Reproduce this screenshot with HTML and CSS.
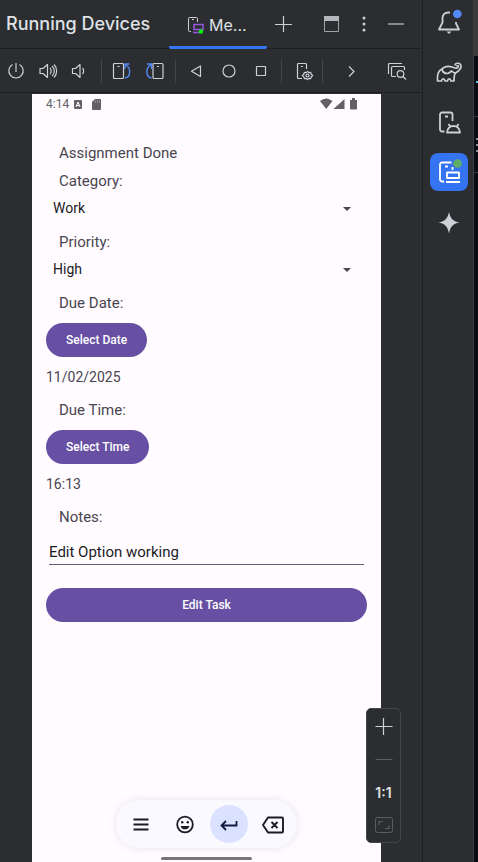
FILE: index.html
```html
<!DOCTYPE html>
<html lang="en">
<head>
<meta charset="utf-8">
<meta name="viewport" content="width=device-width, initial-scale=1">
<title>Running Devices</title>
<link rel="stylesheet" href="styles.css">
</head>
<body>
<main class="panel">
  <header class="header">
    <h1 class="title">Running Devices</h1>
    <button class="tab" type="button">
      <svg width="18" height="20" viewBox="0 0 18 20" fill="none" stroke="#ced0d6"><path d="M4 16.500H2.500a1 1 0 0 1-1-1v-12a1 1 0 0 1 1-1h7a1 1 0 0 1 1 1V7M5 4.500h2"/><path d="M7 9.500h9v5H7zM6 17.500h7" stroke="#955ae0" stroke-width="1.500"/><circle cx="14" cy="16.500" r="2.300" fill="#00f500" stroke="none"/></svg>
      Me...
    </button>
    <div class="header-actions">
      <button class="icon" type="button" aria-label="Add device"><svg width="20" height="20" viewBox="0 0 20 20" stroke="#ced0d6" stroke-width="1.200"><path d="M10.500 2v16M2 10.500h17"/></svg></button>
      <button class="icon window" type="button" aria-label="Window"><svg width="20" height="20" viewBox="0 0 20 20"><path d="M2.500 2.500h14v15h-14z" fill="none" stroke="#9da0a8"/><path d="M2 2h15v5H2z" fill="#b4b6bc"/></svg></button>
      <button class="icon" type="button" aria-label="Options"><svg width="20" height="20" viewBox="0 0 20 20" fill="#ced0d6"><circle cx="10" cy="4" r="1.500"/><circle cx="10" cy="10" r="1.500"/><circle cx="10" cy="16" r="1.500"/></svg></button>
      <button class="icon" type="button" aria-label="Hide"><svg width="20" height="20" viewBox="0 0 20 20" stroke="#a5a7ad" stroke-width="1.500"><path d="M2 10h16"/></svg></button>
    </div>
  </header>

  <div class="toolbar">
    <div class="group first">
      <button class="icon" type="button" aria-label="Power"><svg width="20" height="20" viewBox="0 0 20 20" fill="none" stroke="#ced0d6" stroke-width="1.200"><path d="M10 2v9M6.500 3.500a7.200 7.200 0 1 0 7 0"/></svg></button>
      <button class="icon" type="button" aria-label="Volume up"><svg width="20" height="20" viewBox="0 0 20 20" fill="none" stroke="#ced0d6" stroke-width="1.200" stroke-linejoin="round"><path d="M2 7.500h3l4.500-4v13l-4.500-4H2zM12 7c1.500 1.500 1.500 4.500 0 6M14 5c3 2.500 3 7.500 0 10M16 3.500c3.500 3.500 3.500 9.500 0 13"/></svg></button>
      <button class="icon" type="button" aria-label="Volume down"><svg width="20" height="20" viewBox="0 0 20 20" fill="none" stroke="#ced0d6" stroke-width="1.200" stroke-linejoin="round"><path d="M2.500 7.500h3l4.500-4v13l-4.500-4h-3zM12.500 7c1.500 1.500 1.500 4.500 0 6"/></svg></button>
    </div>
    <div class="group">
      <button class="icon" type="button" aria-label="Rotate left"><svg width="20" height="20" viewBox="0 0 20 20" fill="none" stroke="#ced0d6" stroke-width="1.200"><rect x="1.500" y="2.500" width="10" height="15" rx="1"/><path d="M5.500 5.500h2"/><path d="M13 17c6-1 6-10 1-13M17.500 3H13v5" stroke="#548af7" stroke-width="1.400"/></svg></button>
      <button class="icon" type="button" aria-label="Rotate right"><svg width="20" height="20" viewBox="0 0 20 20" fill="none" stroke="#ced0d6" stroke-width="1.200"><rect x="9" y="2.500" width="10" height="15" rx="1"/><path d="M13 5.500h2"/><path d="M7.500 17C1.500 16 1.500 7 6.500 4M3 3h4.500v5" stroke="#548af7" stroke-width="1.400"/></svg></button>
    </div>
    <div class="group">
      <button class="icon" type="button" aria-label="Back"><svg width="20" height="20" viewBox="0 0 20 20" fill="none" stroke="#ced0d6" stroke-width="1.200" stroke-linejoin="round"><path d="M14.500 5v10.500l-9-5.250z"/></svg></button>
      <button class="icon" type="button" aria-label="Home"><svg width="20" height="20" viewBox="0 0 20 20" fill="none" stroke="#ced0d6" stroke-width="1.200"><circle cx="11" cy="10" r="6"/></svg></button>
      <button class="icon" type="button" aria-label="Overview"><svg width="20" height="20" viewBox="0 0 20 20" fill="none" stroke="#ced0d6" stroke-width="1.200"><rect x="6.500" y="5.500" width="9" height="9" rx=".5"/></svg></button>
    </div>
    <div class="group settings">
      <button class="icon" type="button" aria-label="Device settings"><svg width="20" height="20" viewBox="0 0 20 20" fill="none" stroke="#ced0d6" stroke-width="1.200" stroke-linejoin="round"><path d="M8 17.500H4.500a1 1 0 0 1-1-1v-13a1 1 0 0 1 1-1h7a1 1 0 0 1 1 1V8M7 5.500h2"/><path d="M13.500 10.300l1.300 1.300 1.900-.2.500 1.800 1.500 1.300-1.500 1.300-.5 1.800-1.900-.2-1.300 1.300-1.300-1.300-1.900.2-.5-1.800-1.500-1.300 1.500-1.300.5-1.800 1.900.2z"/><circle cx="13.500" cy="14.500" r="1.500"/></svg></button>
    </div>
    <button class="icon more" type="button" aria-label="More"><svg width="20" height="20" viewBox="0 0 20 20" fill="none" stroke="#ced0d6" stroke-width="1.200"><path d="m8 5.500 5 5-5 5"/></svg></button>
    <button class="icon inspect" type="button" aria-label="Layout inspector"><svg width="20" height="20" viewBox="0 0 20 20" fill="none" stroke="#ced0d6" stroke-width="1.200"><path d="M1.500 13V3.500a1 1 0 0 1 1-1H15"/><path d="M9 15.500H5.500a1 1 0 0 1-1-1v-8a1 1 0 0 1 1-1h11a1 1 0 0 1 1 1V9"/><circle cx="13.500" cy="13" r="3.300"/><path d="m16 15.500 3 3"/></svg></button>
  </div>

  <section class="stage">
    <div class="phone">
      <div class="status">
        <span>4:14</span>
        <svg width="9" height="9" viewBox="0 0 9 9"><rect width="8" height="9" rx="1" fill="#626065"/><path d="m2 7 2-5 2 5M2.700 5.500h2.600" fill="none" stroke="#fff"/></svg>
        <svg class="card" width="9" height="11" viewBox="0 0 9 11"><path d="M3 0h5a1 1 0 0 1 1 1v9a1 1 0 0 1-1 1H1a1 1 0 0 1-1-1V3z" fill="#626065"/><path d="M3.500 1.500v2M5.500 1.500v2M7.500 1.500v2" stroke="#fffbff" stroke-width=".4"/></svg>
        <svg class="signals" width="38" height="12" viewBox="0 0 38 12" fill="#626065"><path d="M0 3q6-5 12.500 0L6.250 11zM13.500 11l11-10v10zM30 2h2V0h3v2h2v8.500a1 1 0 0 1-1 1h-5a1 1 0 0 1-1-1z"/></svg>
      </div>
      <form class="form">
        <p class="label">Assignment Done</p>
        <label class="label" for="category">Category:</label>
        <div class="select">
          <select id="category"><option>Work</option></select>
          <svg width="8" height="4" viewBox="0 0 8 4"><path d="M0 0h8L4 4z" fill="#49454f"/></svg>
        </div>
        <label class="label" for="priority">Priority:</label>
        <div class="select">
          <select id="priority"><option>High</option></select>
          <svg width="8" height="4" viewBox="0 0 8 4"><path d="M0 0h8L4 4z" fill="#49454f"/></svg>
        </div>
        <p class="label">Due Date:</p>
        <button class="pill" type="button">Select Date</button>
        <p class="value">11/02/2025</p>
        <p class="label">Due Time:</p>
        <button class="pill" type="button">Select Time</button>
        <p class="value">16:13</p>
        <label class="label" for="notes">Notes:</label>
        <input class="notes" id="notes" type="text" value="Edit Option working">
        <button class="pill wide" type="button">Edit Task</button>
      </form>
      <div class="keys">
        <button class="key" type="button" aria-label="Menu"><svg width="24" height="24" viewBox="0 0 24 24" stroke="#1b1b21" stroke-width="1.800"><path d="M4.500 7.500h15M4.500 12.500h15M4.500 17.500h15"/></svg></button>
        <button class="key" type="button" aria-label="Emoji"><svg width="24" height="24" viewBox="0 0 24 24" fill="none" stroke="#1b1b21" stroke-width="1.800"><circle cx="12" cy="12.500" r="7.800"/><path d="M7.500 14h9a4.700 4.700 0 0 1-9 0z" fill="#1b1b21" stroke="none"/><circle cx="9.200" cy="10.200" r="1.200" fill="#1b1b21" stroke="none"/><circle cx="14.800" cy="10.200" r="1.200" fill="#1b1b21" stroke="none"/></svg></button>
        <button class="key enter" type="button" aria-label="Enter"><svg width="24" height="24" viewBox="0 0 24 24" fill="none" stroke="#0f1c40" stroke-width="1.800"><path d="M19.500 9v4.500H5M9 9l-4.500 4.500L9 18"/></svg></button>
        <button class="key" type="button" aria-label="Backspace"><svg width="24" height="24" viewBox="0 0 24 24" fill="none" stroke="#1b1b21" stroke-width="1.900" stroke-linejoin="round"><path d="M7 5.500h14a1 1 0 0 1 1 1v13a1 1 0 0 1-1 1H7L2 13zM10.500 10l6 6M16.500 10l-6 6"/></svg></button>
      </div>
      <div class="home-bar"></div>
    </div>
    <div class="zoom">
      <button class="icon" type="button" aria-label="Zoom in"><svg width="20" height="20" viewBox="0 0 20 20" stroke="#ced0d6" stroke-width="1.200"><path d="M9.500 2v17M1.500 10.500h17"/></svg></button>
      <button class="icon" type="button" aria-label="Zoom out"><svg width="20" height="20" viewBox="0 0 20 20" stroke="#5a5d63"><path d="M1.500 10.500h17"/></svg></button>
      <button class="icon" type="button">1:1</button>
      <button class="icon" type="button" aria-label="Fit to screen"><svg width="20" height="20" viewBox="0 0 20 20" fill="none" stroke="#5a5d63"><rect x="1.500" y="2.500" width="17" height="15" rx="2"/><path d="M5 10V6.500h4M15 10v3.500h-4" stroke-width="1.200"/></svg></button>
    </div>
  </section>
</main>

<nav class="rail" aria-label="Tool windows">
  <button class="tool" type="button" aria-label="Notifications"><svg width="28" height="28" viewBox="0 0 28 28" fill="none" stroke="#ced0d6" stroke-width="1.800" stroke-linejoin="round"><path d="M15 4.500h-1.500c-4 0-6 2.500-6 6v4L4 21.500h20l-3-6V14"/><path d="M11.500 23.500h5L14 26z" fill="#ced0d6" stroke="none"/><circle cx="22.300" cy="6" r="4.300" fill="#548af7" stroke="none"/></svg></button>
  <button class="tool" type="button" aria-label="Gradle"><svg width="28" height="28" viewBox="0 0 28 28" fill="none" stroke="#ced0d6" stroke-width="1.700" stroke-linecap="round" stroke-linejoin="round"><path d="M20 6.800c.5-2 5.500-2.500 6 1 .4 4-3.500 5.700-5.500 7.200-1 .8-1.500 2.500-1.500 8h-3c-.5-2.800-3-2.800-3.500 0H10c-.5-2.800-3-2.800-3.500 0H2.500C2 17 3.500 12.500 7 11c2-2.500 6.500-3.200 10-2 2.500.8 4.500 2.200 6 .5.800-1 .4-2-1-1.700"/><path d="M7 11c.5 3 3 4.500 5.500 4.500 2-.3 2.800-1.500 4-2.500M20 15c-1.500-.5-2.500-1-3.500-2"/></svg></button>
  <button class="tool" type="button" aria-label="Device manager"><svg width="28" height="28" viewBox="0 0 28 28" fill="none" stroke="#ced0d6" stroke-width="1.800" stroke-linejoin="round"><path d="M9.500 23.500H7a2 2 0 0 1-2-2v-15a2 2 0 0 1 2-2h8.500a2 2 0 0 1 2 2V13M10 8.500h3"/><path d="M12 24.500c.3-4 3-6.500 6.500-6.500s6.200 2.500 6.500 6.500zM15 18.500l-1.500-2.500M22 18.500l1.500-2.500"/></svg></button>
  <button class="tool active" type="button" aria-label="Running devices"><svg width="28" height="28" viewBox="0 0 28 28" fill="none" stroke="#fff" stroke-width="1.800" stroke-linejoin="round"><path d="M9 23.500H7a2 2 0 0 1-2-2V6.500a2 2 0 0 1 2-2h9.500M17.500 9v3M10 8.500h3M12 14.500h12v5.500H12zM11 24h14"/><circle cx="22.500" cy="5.500" r="4.300" fill="#5fad65" stroke="none"/></svg></button>
  <button class="tool" type="button" aria-label="Gemini"><svg width="28" height="28" viewBox="0 0 28 28" fill="#ced0d6"><path d="M14 4c1.500 6.500 3.500 9 10.500 10.500C17.500 16 15.500 18.500 14 25.500c-1.500-7-3.500-9.500-10.500-11C10.500 13 12.500 10.500 14 4z"/></svg></button>
</nav>

<aside class="edge" aria-hidden="true">
  <div class="edge-top"></div>
  <div class="edge-code"><i class="caret"></i></div>
  <div class="edge-row"><i></i><i></i><i></i></div>
</aside>
</body>
</html>
```
FILE: styles.css
```css
* {
  box-sizing: border-box;
}

body {
  margin: 0;
  min-height: 100vh;
  display: grid;
  grid-template-columns: minmax(0, 1fr) 51px 5px;
  background: #2b2d30;
  color: #dfe1e5;
  font-family: Inter, "Liberation Sans", sans-serif;
}

h1,
p {
  margin: 0;
}

button,
select,
input {
  margin: 0;
  padding: 0;
  border: 0;
  background: none;
  color: inherit;
  font: inherit;
}

svg {
  display: block;
  flex: none;
}

.panel {
  display: flex;
  flex-direction: column;
}

.header {
  display: flex;
  height: 49px;
  padding-left: 6px;
  border-bottom: 1px solid #1e1f22;
}

.title {
  width: 163px;
  font-size: 18px;
  font-weight: 500;
  line-height: 48px;
  white-space: nowrap;
}

.tab {
  display: flex;
  align-items: center;
  gap: 4px;
  width: 98px;
  height: 49px;
  padding: 3px 0 0 18px;
  border-bottom: 3px solid #3574f0;
  border-radius: 2px;
  font-size: 16px;
}

.header-actions {
  display: flex;
  flex: 1;
  align-items: center;
  gap: 12px;
  padding: 0 16px 0 6px;
}

.window {
  margin-left: auto;
}

.icon {
  display: grid;
  place-items: center;
  width: 20px;
  height: 20px;
}

.toolbar {
  display: flex;
  align-items: center;
  height: 44px;
  border-bottom: 1px solid #1e1f22;
}

.group {
  display: flex;
  align-items: center;
  gap: 12px;
  height: 24px;
  padding: 0 11px 0 10px;
  border-right: 1px solid #43454a;
}

.first {
  padding-left: 6px;
}

.settings {
  padding: 0 8px 0 12px;
}

.more {
  margin-left: 18px;
}

.inspect {
  margin: 0 15px 0 auto;
}

.stage {
  position: relative;
  display: flex;
  flex: 1;
  padding: 1px 41px 0 32px;
}

.phone {
  display: flex;
  flex: 1;
  flex-direction: column;
  background: #fffbff;
  color: #49454f;
  font-family: Roboto, sans-serif;
}

.status {
  display: flex;
  align-items: center;
  height: 20px;
  padding: 0 23px 0 14px;
  color: #626065;
  font-size: 12px;
}

.status span {
  margin-right: 5px;
}

.card {
  margin-left: 9px;
}

.signals {
  margin-left: auto;
}

.form {
  display: flex;
  flex-direction: column;
  align-items: flex-start;
  padding: 25px 14px 0;
}

.label {
  padding-left: 13px;
  font-size: 15px;
  line-height: 28px;
}

.select {
  display: grid;
  align-items: center;
  width: 100%;
  margin-bottom: 6px;
}

.select select,
.select svg {
  grid-area: 1 / 1;
}

.select select {
  appearance: none;
  height: 27px;
  padding: 0 0 2px 7px;
  color: #1c1b1f;
  font-size: 14px;
}

.select svg {
  justify-self: end;
  margin-right: 16px;
  pointer-events: none;
}

.pill {
  height: 34px;
  margin-top: 6px;
  padding: 0 20px;
  border-radius: 17px;
  background: #6750a4;
  color: #fff;
  font-size: 12px;
  font-weight: 500;
}

.value {
  margin: 10px 0 9px;
  font-size: 14px;
  line-height: 20px;
}

.notes {
  width: calc(100% - 6px);
  height: 26px;
  margin: 8px 3px 0;
  border-bottom: 1px solid #625b71;
  border-radius: 0;
  color: #1c1b1f;
  font-size: 15px;
}

.wide {
  width: 100%;
  margin-top: 23px;
}

.keys {
  display: flex;
  align-self: center;
  align-items: center;
  gap: 6px;
  height: 48px;
  margin-top: auto;
  padding: 0 5px 0 6px;
  border-radius: 24px;
  background: #f9f9ff;
  box-shadow: 0 0 8px #0000001a;
}

.key {
  display: grid;
  place-items: center;
  width: 38px;
  height: 38px;
  border-radius: 50%;
}

.enter {
  background: #dae2ff;
}

.home-bar {
  align-self: center;
  width: 91px;
  height: 3px;
  margin: 9px 0 2px;
  border-radius: 2px;
  background: #777478;
}

.zoom {
  position: absolute;
  right: 21px;
  bottom: 19px;
  display: flex;
  flex-direction: column;
  align-items: center;
  gap: 13px;
  width: 35px;
  padding: 7px 0;
  border: 1px solid #43454a;
  border-radius: 5px;
  background: #2b2d30;
  font-size: 14px;
  font-weight: 600;
}

.rail {
  display: flex;
  flex-direction: column;
  align-items: center;
  gap: 12px;
  padding: 3px 0 0 2px;
  border-left: 1px solid #1e1f22;
}

.tool {
  display: grid;
  place-items: center;
  width: 38px;
  height: 38px;
  border-radius: 8px;
}

.active {
  background: #3574f0;
}

.edge {
  border-left: 1px solid #3c3e42;
  background: #090e14;
}

.edge-top {
  height: 56px;
  background: #3c3c3c;
}

.edge-code {
  display: flex;
  align-items: center;
  justify-content: flex-end;
  height: 60px;
}

.caret {
  width: 2px;
  height: 2px;
  margin-bottom: 8px;
  background: #56c7e8;
}

.edge-row {
  display: flex;
  flex-direction: column;
  align-items: flex-end;
  justify-content: center;
  gap: 4px;
  height: 57px;
  border: solid #3c3e42;
  border-width: 1px 0;
}

.edge-row i {
  width: 2px;
  height: 2px;
  background: #8b8e94;
}
```
